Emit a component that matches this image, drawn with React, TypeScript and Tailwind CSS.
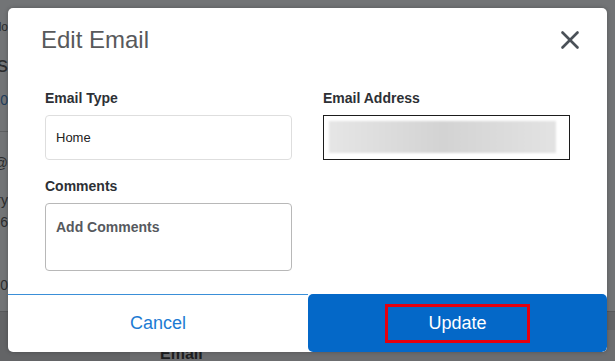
import { X } from "lucide-react";

const font = { fontFamily: '"Liberation Sans", Arial, sans-serif' };

function Backdrop() {
    // dimmed page behind the dialog, only its edges show
    return (
        <div className="absolute inset-0 bg-[#727476] flex flex-col">
            <div className="flex-1 flex">
                <div className="w-[100px] -ml-[92px] flex flex-col items-end text-[#2b2c2e] text-[14px] leading-[16px]">
                    <div className="mt-[20px] text-[12px] leading-[14px]">Emplo</div>
                    <div className="mt-[18px] text-[22px] leading-[26px]">Details</div>
                    <div className="mt-[14px] text-[#1f3d5c]">ID 10</div>
                    <div className="mt-[23px] h-px w-full bg-[#5d5f61]" />
                    <div className="mt-[23px]">name@</div>
                    <div className="mt-[21px]">Primary</div>
                    <div className="mt-[6px]">556</div>
                    <div className="mt-[47px]">2020</div>
                </div>
            </div>
            <div className="h-[50px] bg-[#636466] border-t border-[#58595b] flex flex-col">
                <div className="mt-[18px] flex-1 ml-[130px] bg-[#6c6d6f] pl-[30px] pt-[15px] text-[16px] font-bold leading-[18px] text-[#1d1e20]">
                    Email
                </div>
            </div>
        </div>
    );
}

export default function App() {
    return (
        <div className="relative w-[615px] h-[361px] overflow-hidden p-[8px] pb-[9px]" style={font}>
            <Backdrop />

            {/* dialog */}
            <div className="relative h-full bg-white rounded-[5px] shadow-[0_0_4px_rgba(0,0,0,0.25)] flex flex-col overflow-hidden">
                <div className="flex items-start justify-between pt-[18px] pl-[33px] pr-[22px]">
                    <h2 className="text-[24px] leading-[28px] text-[#58595b]">Edit Email</h2>
                    <button className="-mt-[1px] text-[#4b5158]">
                        <X className="w-[30px] h-[30px]" strokeWidth={2.1} />
                    </button>
                </div>

                <div className="mt-[35px] px-[37px] grid grid-cols-2 gap-x-[31px]">
                    <div>
                        <label className="block text-[14px] leading-[16px] font-bold text-[#2d3035]">Email Type</label>
                        <div className="mt-[9px] h-[45px] border border-[#dedede] rounded-[4px] flex items-center px-[10px] text-[13px] text-[#222]">
                            Home
                        </div>
                        <label className="block mt-[18px] text-[14px] leading-[16px] font-bold text-[#2d3035]">Comments</label>
                        <div className="mt-[9px] h-[68px] border border-[#b8b8b8] rounded-[4px] px-[10px] pt-[15px] text-[14px] leading-[16px] font-bold text-[#56595e]">
                            Add Comments
                        </div>
                    </div>
                    <div>
                        <label className="block text-[14px] leading-[16px] font-bold text-[#2d3035]">Email Address</label>
                        <div className="mt-[9px] h-[45px] border border-[#1c1c1c] pl-[5px] pr-[13px] pt-[5px]">
                            <div className="h-[32px] bg-gradient-to-r from-[#e6e6e6] via-[#d3d3d3] to-[#e3e3e3] blur-[1px]" />
                        </div>
                    </div>
                </div>

                <div className="mt-auto flex h-[58px]">
                    <button className="flex-1 border-t border-[#3a8fd8] flex items-center justify-center text-[18px] text-[#1c7bd3]">
                        Cancel
                    </button>
                    <button className="w-[299px] bg-[#0468c8] rounded-[5px] flex items-center justify-center">
                        <span className="w-[145px] h-[39px] border-[3px] border-[#e3000f] flex items-center justify-center text-[18px] text-white">
                            Update
                        </span>
                    </button>
                </div>
            </div>
        </div>
    );
}
